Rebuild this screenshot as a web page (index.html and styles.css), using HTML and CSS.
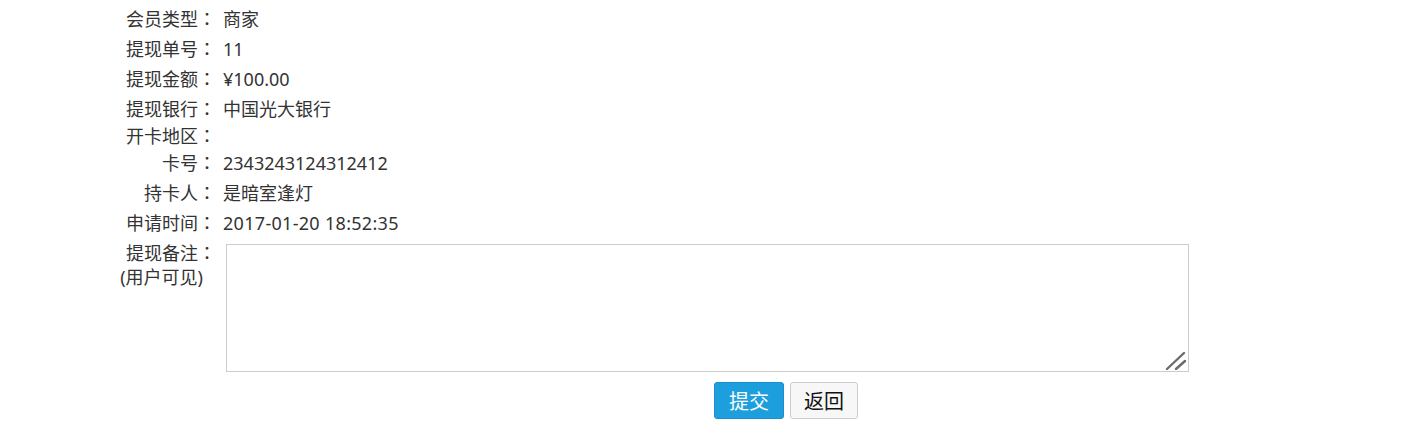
FILE: index.html
```html
<!DOCTYPE html>
<html lang="zh-CN">
<head>
<meta charset="utf-8">
<title>提现详情</title>
<link rel="stylesheet" href="styles.css">
</head>
<body>
<div class="detail">
  <div class="row"><div class="label">会员类型<span class="colon" lang="zh-TW">：</span></div><div class="value">商家</div></div>
  <div class="row"><div class="label">提现单号<span class="colon" lang="zh-TW">：</span></div><div class="value">11</div></div>
  <div class="row"><div class="label">提现金额<span class="colon" lang="zh-TW">：</span></div><div class="value">¥100.00</div></div>
  <div class="row"><div class="label">提现银行<span class="colon" lang="zh-TW">：</span></div><div class="value">中国光大银行</div></div>
  <div class="row row-empty"><div class="label">开卡地区<span class="colon" lang="zh-TW">：</span></div><div class="value"></div></div>
  <div class="row"><div class="label">卡号<span class="colon" lang="zh-TW">：</span></div><div class="value">2343243124312412</div></div>
  <div class="row"><div class="label">持卡人<span class="colon" lang="zh-TW">：</span></div><div class="value">是暗室逢灯</div></div>
  <div class="row"><div class="label">申请时间<span class="colon" lang="zh-TW">：</span></div><div class="value num">2017-01-20 18:52:35</div></div>
  <div class="row row-note">
    <div class="label">提现备注<span class="colon" lang="zh-TW">：</span><br><span class="sub">(用户可见)</span></div>
    <div class="value note-wrap">
      <textarea class="note"></textarea>
      <svg class="grip" width="22" height="20" viewBox="0 0 22 20" aria-hidden="true">
        <line x1="2" y1="19" x2="19" y2="3" stroke="#6b6b6b" stroke-width="2.4" stroke-linecap="round"/>
        <line x1="11" y1="19" x2="20" y2="11" stroke="#6b6b6b" stroke-width="2.4" stroke-linecap="round"/>
      </svg>
    </div>
  </div>
  <div class="actions">
    <button class="btn btn-primary" type="button">提交</button>
    <button class="btn btn-default" type="button">返回</button>
  </div>
</div>
</body>
</html>
```
FILE: styles.css
```css
html, body {
  margin: 0;
  padding: 0;
  background: #fff;
}
body {
  font-family: "Noto Sans", "Noto Sans CJK SC", sans-serif;
  font-size: 18px;
  color: #333;
}
.detail {
  display: flex;
  flex-direction: column;
  padding-top: 4px;
}
.row {
  display: flex;
  align-items: flex-start;
  line-height: 30px;
  min-height: 30px;
}
.row-empty {
  line-height: 24px;
  min-height: 24px;
}
.label {
  width: 216px;
  flex: none;
  text-align: right;
}
.colon {
  font-family: "Noto Sans CJK TC", sans-serif;
  line-height: 1;
}
.value {
  margin-left: 7px;
}
.num {
  letter-spacing: 0.3px;
}
.row-note {
  line-height: 24px;
  margin-top: 3px;
}
.row-note .label .sub {
  margin-right: 13px;
}
.note-wrap {
  position: relative;
}
.note {
  display: block;
  margin: 3px 0 0 3px;
  width: 963px;
  height: 128px;
  box-sizing: border-box;
  border: 1px solid #ccc;
  padding: 4px;
  font-family: inherit;
  font-size: 16px;
  resize: none;
}
.grip {
  position: absolute;
  right: 2px;
  bottom: 2px;
}
.actions {
  display: flex;
  gap: 6px;
  padding-left: 714px;
  margin-top: 10px;
}
.btn {
  font-family: "Noto Sans CJK SC", sans-serif;
  font-size: 20px;
  height: 37px;
  padding: 0 14px;
  border-radius: 3px;
  line-height: 1;
  cursor: pointer;
}
.btn-primary {
  background: #1e9fdd;
  border: 1px solid #1b8fc9;
  color: #fff;
}
.btn-default {
  width: 68px;
  padding: 0;
  background: #f7f7f7;
  border: 1px solid #ccc;
  color: #111;
}
```
